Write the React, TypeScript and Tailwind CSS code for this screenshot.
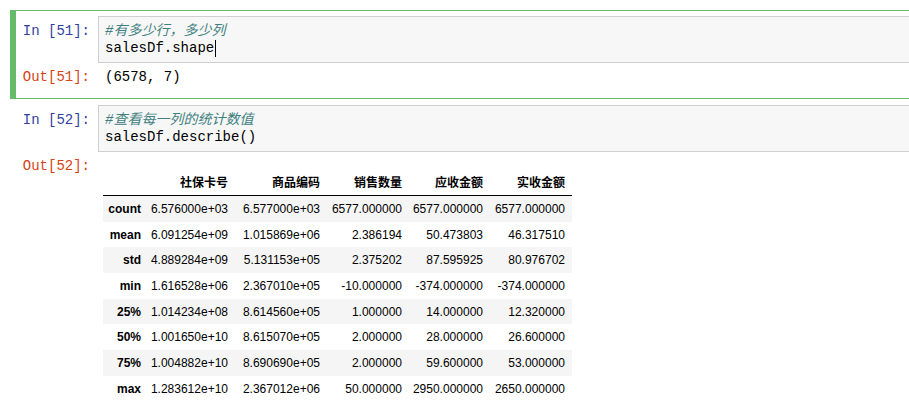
const mono = "font-['Liberation_Mono','Noto_Sans_CJK_SC',monospace]";

const columns = ['社保卡号', '商品编码', '销售数量', '应收金额', '实收金额'];

const rows: [string, string[]][] = [
  ['count', ['6.576000e+03', '6.577000e+03', '6577.000000', '6577.000000', '6577.000000']],
  ['mean', ['6.091254e+09', '1.015869e+06', '2.386194', '50.473803', '46.317510']],
  ['std', ['4.889284e+09', '5.131153e+05', '2.375202', '87.595925', '80.976702']],
  ['min', ['1.616528e+06', '2.367010e+05', '-10.000000', '-374.000000', '-374.000000']],
  ['25%', ['1.014234e+08', '8.614560e+05', '1.000000', '14.000000', '12.320000']],
  ['50%', ['1.001650e+10', '8.615070e+05', '2.000000', '28.000000', '26.600000']],
  ['75%', ['1.004882e+10', '8.690690e+05', '2.000000', '59.600000', '53.000000']],
  ['max', ['1.283612e+10', '2.367012e+06', '50.000000', '2950.000000', '2650.000000']],
];

const grid = 'grid grid-cols-[45px_87px_92px_82px_81px_82px]';

function Prompt({ kind, n }: { kind: 'In' | 'Out'; n: number }) {
  return (
    <div
      className={`w-[82px] shrink-0 pr-[8px] text-right text-[14px] leading-[17px] ${mono} ${
        kind === 'In' ? 'text-[#303f9f]' : 'text-[#d84315]'
      }`}
    >
      {kind === 'In' ? `In [${n}]:` : `Out[${n}]:`}
    </div>
  );
}

function InputBox({ comment, code, cursor }: { comment: string; code: string; cursor?: boolean }) {
  return (
    <div className={`flex-1 border border-[#cfcfcf] bg-[#f7f7f7] pl-[6px] pt-[6px] pb-[5px] text-[14px] leading-[17px] ${mono}`}>
      <div className="italic text-[#408080]">{comment}</div>
      <div className="flex items-center text-black">
        {code}
        {cursor && <span className="ml-[1px] inline-block h-[17px] w-[1px] bg-black" />}
      </div>
    </div>
  );
}

function DescribeTable() {
  return (
    <div className="ml-[5px] mt-[18px] w-[469px] font-['Liberation_Sans','Noto_Sans_CJK_SC',sans-serif] text-[12px] text-black">
      <div className={`${grid} h-[26px] items-center border-b border-black font-bold`}>
        <div />
        {columns.map((c) => (
          <div key={c} className="pr-[7px] text-right">
            {c}
          </div>
        ))}
      </div>
      {rows.map(([label, vals], i) => (
        <div key={label} className={`${grid} h-[25.7px] items-center ${i % 2 === 0 ? 'bg-[#f5f5f5]' : ''}`}>
          <div className="pr-[7px] text-right font-bold">{label}</div>
          {vals.map((v, j) => (
            <div key={j} className="pr-[7px] text-right">
              {v}
            </div>
          ))}
        </div>
      ))}
    </div>
  );
}

export default function App() {
  return (
    <div className="h-[416px] w-[909px] overflow-hidden bg-white">
      <div className="pl-[10px] pt-[10px]">
        {/* selected cell */}
        <div className="w-[1000px] border-y border-l-[6px] border-[#66bb6a] pt-[5px]">
          <div className="flex">
            <div className="pt-[7px]">
              <Prompt kind="In" n={51} />
            </div>
            <InputBox comment="#有多少行，多少列" code="salesDf.shape" cursor />
          </div>
          <div className="flex h-[35px] pt-[6px]">
            <Prompt kind="Out" n={51} />
            <div className={`pl-[7px] text-[14px] leading-[17px] text-black ${mono}`}>(6578, 7)</div>
          </div>
        </div>

        <div className="w-[1000px] border-y border-l-[6px] border-transparent pt-[5px]">
          <div className="flex">
            <div className="pt-[7px]">
              <Prompt kind="In" n={52} />
            </div>
            <InputBox comment="#查看每一列的统计数值" code="salesDf.describe()" />
          </div>
          <div className="flex pt-[6px]">
            <Prompt kind="Out" n={52} />
            <div className="-mt-[6px]">
              <DescribeTable />
            </div>
          </div>
        </div>
      </div>
    </div>
  );
}
